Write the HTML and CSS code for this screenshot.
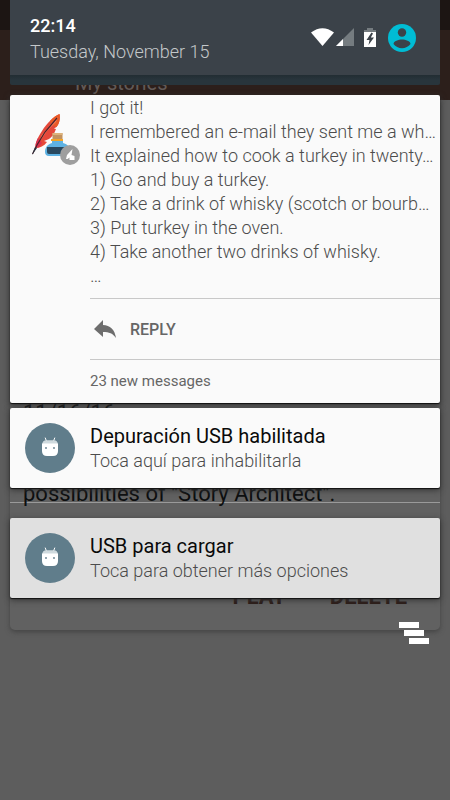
FILE: index.html
```html
<!DOCTYPE html>
<html lang="en">
<head>
<meta charset="utf-8">
<meta name="viewport" content="width=device-width, initial-scale=1">
<title>Notifications</title>
<link rel="stylesheet" href="styles.css">
</head>
<body>
<svg class="defs" aria-hidden="true">
  <symbol id="android" viewBox="0 0 50 50">
    <path d="M20.300 15l1.200 3.200M29.700 15l-1.200 3.200" stroke="#fff" stroke-width="1" stroke-linecap="round"/>
    <path d="M17.300 21q.2-3.500 4-3.700h7.500q3.800.2 4 3.700z" fill="#cfdade"/>
    <path d="M17 20.500h16v7.500q0 5-5 5h-6q-5 0-5-5z" fill="#fff"/>
    <circle cx="21" cy="25" r=".9" fill="#607d8b"/><circle cx="29" cy="25" r=".9" fill="#607d8b"/>
  </symbol>
</svg>
<div class="screen">
  <div class="app">
    <div class="app-status"></div>
    <header class="app-bar">My stories</header>
    <main class="story">
      <div class="story-date">11/16/16</div>
      <div class="story-text">possibilities of "Story Architect".</div>
      <div class="story-actions"><button>PLAY</button><button>DELETE</button></div>
    </main>
  </div>

  <div class="shade">
    <header class="panel">
      <div class="panel-main">
        <div>
          <div class="clock">22:14</div>
          <div class="date">Tuesday, November 15</div>
        </div>
        <div class="status">
          <svg class="signals" viewBox="0 0 68 22" aria-label="Wi-Fi, signal and battery">
            <path d="M0 5.500Q11.500-3 23 5.500L11.500 19z" fill="#fff"/>
            <path d="M43 1v18H25z" fill="#757c80"/>
            <path d="M32 12v7h-7z" fill="#fff"/>
            <path d="M56 1h6v2h3v3H53V3h3z" fill="#757c80"/>
            <path d="M53 5h12v15H53z" fill="#fff"/>
            <path d="M60.500 5.500l-5 7.500h3l-1 5 5.500-7.500h-3.200l2.200-4z" fill="#3b4249"/>
          </svg>
          <svg class="avatar" viewBox="0 0 28 28" aria-label="Profile">
            <circle cx="14" cy="14" r="14" fill="#00bcd4"/>
            <circle cx="14" cy="8.500" r="4.200" fill="#3b4249"/>
            <path d="M5.500 20C5.500 17.200 10.500 15.500 14 15.500s8.500 1.700 8.500 4.500c-2 2.700-5 4.200-8.500 4.200s-6.500-1.500-8.500-4.200z" fill="#3b4249"/>
          </svg>
        </div>
      </div>
      <div class="panel-foot"></div>
    </header>

    <article class="note messages">
      <div class="icon-col">
        <svg class="quill" viewBox="0 0 56 54" aria-hidden="true">
          <path d="M10.500 35C10 30 13 24 17 18 22 10 28 4 34.500 1 35.500 6 34 11 31.500 14L29 15.500 31 16C29 21 27 24 24 26L19 28 22 29C19 33 15 35 10.500 35z" fill="#e5483a"/>
          <path d="M25 8C28 4.500 31 2.500 34.500 1 35.500 6 34 11 31.500 14L27 12z" fill="#ea5a26"/>
          <path d="M16 23L26 11 33 4 31 9 22 18 15 28z" fill="#f47a58"/>
          <path d="M10.500 35C10 31 12 27 13 25L17 30 14 34z" fill="#d83250"/>
          <path d="M32 5L20 19 12 32 7.500 41" fill="none" stroke="#47202c" stroke-width="1.200"/>
          <path d="M10 34L7 42 12 35z" fill="#29303c"/>
          <path d="M27.500 20h10v7h-10z" fill="#c2925f"/><path d="M27.500 20h10v2h-10z" fill="#dcb27b"/>
          <path d="M27 27h11v3c4 1 7 4 7 7v3c0 2-2 3-4 3H24c-3 0-4-2-4-4 0-5 3-8 7-9z" fill="#5eb2e3"/>
          <path d="M26 26h12v2H26z" fill="#f3a526"/>
          <path d="M22 34h22v7H24q-2 0-2-2z" fill="#28485f"/>
          <circle cx="45" cy="42" r="10" fill="#9e9e9e"/>
          <path d="M41 46l1-4 5.500-6-1 6 3 1v4h-5v-2.500l-2 1.500z" fill="#fff"/>
        </svg>
      </div>
      <div class="message-body">
        <div class="lines">
          <p>I got it!</p>
          <p>I remembered an e-mail they sent me a wh…</p>
          <p>It explained how to cook a turkey in twenty…</p>
          <p>1) Go and buy a turkey.</p>
          <p>2) Take a drink of whisky (scotch or bourb…</p>
          <p>3) Put turkey in the oven.</p>
          <p>4) Take another two drinks of whisky.</p>
          <p>…</p>
        </div>
        <button class="reply">
          <svg viewBox="0 0 22 18" aria-hidden="true"><path d="M9 5V0L0 9l9 8v-5c6 0 10 1.500 13 6C21 10 16 5 9 5z" fill="#6d6d6d"/></svg>
          REPLY
        </button>
        <div class="summary">23 new messages</div>
      </div>
    </article>

    <article class="note compact">
      <div class="icon-col"><svg class="round" viewBox="0 0 50 50" aria-hidden="true"><use href="#android"/></svg></div>
      <div>
        <h2>Depuración USB habilitada</h2>
        <p>Toca aquí para inhabilitarla</p>
      </div>
    </article>

    <article class="note compact ongoing">
      <div class="icon-col"><svg class="round" viewBox="0 0 50 50" aria-hidden="true"><use href="#android"/></svg></div>
      <div>
        <h2>USB para cargar</h2>
        <p>Toca para obtener más opciones</p>
      </div>
    </article>

    <button class="clear" aria-label="Clear all">
      <svg viewBox="0 0 30 22" aria-hidden="true"><path d="M0 0h20v6H0zM5 8h20v6H5zM10 16h20v6H10z" fill="#fff"/></svg>
    </button>
  </div>
</div>
</body>
</html>
```
FILE: styles.css
```css
* { box-sizing: border-box; }
body {
  margin: 0;
  background: #5d5d5d;
  font-family: Roboto, "Noto Sans", sans-serif;
}
h2, p { margin: 0; font-weight: 400; }
button {
  border: 0;
  padding: 0;
  background: none;
  font: inherit;
  color: inherit;
}
svg { display: block; }
.defs { position: absolute; width: 0; height: 0; }
.screen { position: relative; min-height: 100vh; overflow: hidden; }

/* Dimmed app behind the shade */
.app-status { height: 30px; background: #1c1513; }
.app-bar {
  height: 70px;
  padding: 39px 75px 0;
  background: #2c1f1b;
  color: #625a57;
  font-size: 20px;
  line-height: 28px;
}
.story {
  margin: 0 10px;
  height: 530px;
  padding: 298px 13px 0;
  display: flex;
  flex-direction: column;
  background: #616161;
  border-radius: 0 0 5px 5px;
  box-shadow: 0 2px 5px #444;
  color: #0c0e0f;
}
.story-date { font-size: 22px; line-height: 30px; }
.story-text {
  margin: 50px -13px 0;
  padding: 0 13px;
  height: 25px;
  border-bottom: 1px solid #9a9a9a;
  font-size: 22px;
  line-height: 32px;
}
.story-actions {
  display: flex;
  justify-content: flex-end;
  gap: 44px;
  margin-top: 80px;
  padding-right: 20px;
  color: #2c1b17;
  font-size: 22px;
  font-weight: 700;
  line-height: 28px;
}

/* Notification shade */
.shade {
  position: absolute;
  inset: 0;
  padding: 0 10px;
  display: flex;
  flex-direction: column;
}
.panel {
  overflow: hidden;
  border-radius: 0 0 2px 2px;
  margin-bottom: 10px;
  flex: none;
}
.panel-main {
  height: 75px;
  padding: 12px 24px 0 20px;
  display: flex;
  justify-content: space-between;
  background: #3b4249;
}
.panel-foot { height: 10px; background: linear-gradient(#222d33, #28353c 5px); }
.clock { color: #fff; font-size: 18px; font-weight: 500; line-height: 28px; }
.date { color: #c4c8ca; font-size: 18px; font-weight: 300; line-height: 24px; }
.status { display: flex; align-items: center; gap: 9px; height: 52px; }
.signals { width: 68px; height: 22px; }
.avatar { width: 28px; height: 28px; }

.note {
  display: flex;
  flex: none;
  background: #fafafa;
  border-radius: 2px;
  box-shadow: 0 1px 1px #111, 0 2px 6px #333;
  color: #666;
}
.icon-col { flex: 0 0 80px; }
.quill { width: 56px; height: 54px; margin: 18px 0 0 15px; }
.message-body { flex: 1; min-width: 0; }
.lines {
  padding: 1px 0 10px;
  border-bottom: 1px solid #c8c8c8;
  font-size: 18px;
  line-height: 24px;
  white-space: nowrap;
}
.lines p, .compact p { color: #4c4c4c; font-weight: 300; }
.reply {
  display: flex;
  align-items: center;
  gap: 14px;
  width: 100%;
  height: 61px;
  padding-left: 4px;
  border-bottom: 1px solid #c8c8c8;
  font-size: 16px;
  font-weight: 500;
}
.reply svg { width: 22px; height: 18px; }
.summary { height: 43px; font-size: 15px; line-height: 43px; }
.compact { height: 80px; margin-top: 5px; align-items: center; }
.compact h2 { color: #0a0a0a; font-size: 20px; line-height: 26px; }
.compact p { font-size: 18px; line-height: 24px; }
.ongoing { margin-top: 30px; background: #e0e0e0; }
.round { width: 50px; height: 50px; margin-left: 15px; border-radius: 50%; background: #607d8b; }
.clear { align-self: flex-end; margin: 24px 11px 0 0; }
.clear svg { width: 30px; height: 22px; }
```
